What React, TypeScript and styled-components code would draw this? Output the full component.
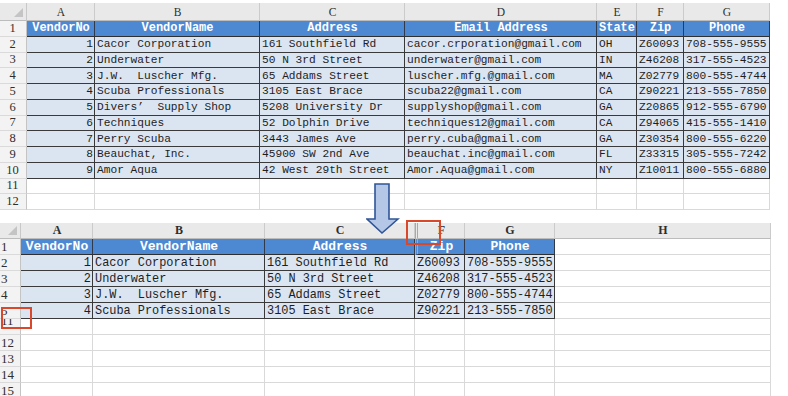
import React from "react";
import styled, { createGlobalStyle, css } from "styled-components";

const GlobalStyle = createGlobalStyle`
  html, body {
    margin: 0;
    padding: 0;
    background: #ffffff;
  }
  * {
    box-sizing: border-box;
  }
`;

type Kind = "corner" | "col" | "rownum" | "head" | "data" | "empty";

const MONO = `"Liberation Mono", "DejaVu Sans Mono", monospace`;
const SERIF = `"Liberation Serif", "DejaVu Serif", serif`;

const Page = styled.div`
  position: relative;
  width: 788px;
  height: 396px;
  overflow: hidden;
  padding-top: 3px;
  display: flex;
  flex-direction: column;
  gap: 13px;
`;

const Sheet = styled.div<{ $cols: number[]; $rows: string; $big?: boolean }>`
  display: grid;
  grid-template-columns: ${({ $cols }) => $cols.map((c) => `${c}px`).join(" ")};
  grid-template-rows: ${({ $rows }) => $rows};
  font-family: ${MONO};
  font-size: ${({ $big }) => ($big ? "11.9px" : "11.2px")};
  color: #1e1e1e;
  flex-shrink: 0;
`;

const Cell = styled.div<{ $kind: Kind; $align?: string; $big?: boolean; $clip?: boolean; $hidden?: boolean }>`
  position: relative;
  display: flex;
  align-items: center;
  justify-content: ${({ $align }) => $align || "flex-start"};
  white-space: pre;
  overflow: hidden;
  padding: 0 1px 0 2px;
  border-right: 1px solid #d6d6d6;
  border-bottom: 1px solid #d6d6d6;

  ${({ $kind, $big }) =>
    $kind === "corner" &&
    css`
      background: #e9e9e9;
      border-right-color: #c8c8c8;
      border-bottom-color: #bcbcbc;
      &::after {
        content: "";
        position: absolute;
        right: 3px;
        bottom: 3px;
        width: 0;
        height: 0;
        border-left: 9px solid transparent;
        border-bottom: 9px solid #c4c4c4;
        display: ${$big ? "block" : "block"};
      }
    `}

  ${({ $kind, $big }) =>
    $kind === "col" &&
    css`
      background: #e9e9e9;
      border-right-color: #cbcbcb;
      border-bottom-color: #bcbcbc;
      justify-content: center;
      font-family: ${SERIF};
      font-size: ${$big ? "12px" : "11.5px"};
      font-weight: ${$big ? 700 : 400};
      color: #2e2e2e;
    `}

  ${({ $kind, $big }) =>
    $kind === "rownum" &&
    css`
      background: #f3f3f3;
      border-right-color: #c4c4c4;
      border-bottom-color: #dadada;
      font-family: ${SERIF};
      font-size: ${$big ? "13px" : "12.5px"};
      color: #2e2e2e;
      justify-content: ${$big ? "flex-start" : "center"};
      padding-left: ${$big ? "1px" : "0"};
    `}

  ${({ $kind, $big }) =>
    $kind === "head" &&
    css`
      background: #4d88d3;
      color: #ffffff;
      font-weight: 700;
      font-size: ${$big ? "13px" : "12px"};
      justify-content: center;
      border-right-color: #2f3b4c;
      border-bottom-color: #2f2f2f;
    `}

  ${({ $kind }) =>
    $kind === "data" &&
    css`
      background: #dbe5f1;
      border-right-color: #383838;
      border-bottom-color: #3a3a3a;
    `}

  ${({ $kind }) =>
    $kind === "empty" &&
    css`
      background: #ffffff;
      border-right-color: #d9d9d9;
      border-bottom-color: #d9d9d9;
    `}

  ${({ $hidden }) =>
    $hidden &&
    css`
      border-left: 3px double #a8a8a8;
    `}

  ${({ $clip }) =>
    $clip &&
    css`
      align-items: flex-start;
      line-height: 1;
      & > span {
        margin-top: -5px;
      }
    `}
`;

const Marker = styled.div<{ $x: number; $y: number; $w: number; $h: number }>`
  position: absolute;
  left: ${({ $x }) => $x}px;
  top: ${({ $y }) => $y}px;
  width: ${({ $w }) => $w}px;
  height: ${({ $h }) => $h}px;
  border: 2px solid #d9482b;
  pointer-events: none;
`;

const ArrowWrap = styled.svg`
  position: absolute;
  left: 366px;
  top: 182px;
`;

const topCols = [27, 68, 165, 145, 192, 40, 47, 86];
const topLetters = ["A", "B", "C", "D", "E", "F", "G"];
const topHead = ["VendorNo", "VendorName", "Address", "Email Address", "State", "Zip", "Phone"];

const vendors: (string | number)[][] = [
  [1, "Cacor Corporation", "161 Southfield Rd", "cacor.crporation@gmail.com", "OH", "Z60093", "708-555-9555"],
  [2, "Underwater", "50 N 3rd Street", "underwater@gmail.com", "IN", "Z46208", "317-555-4523"],
  [3, "J.W.  Luscher Mfg.", "65 Addams Street", "luscher.mfg.@gmail.com", "MA", "Z02779", "800-555-4744"],
  [4, "Scuba Professionals", "3105 East Brace", "scuba22@gmail.com", "CA", "Z90221", "213-555-7850"],
  [5, "Divers’  Supply Shop", "5208 University Dr", "supplyshop@gmail.com", "GA", "Z20865", "912-555-6790"],
  [6, "Techniques", "52 Dolphin Drive", "techniques12@gmail.com", "CA", "Z94065", "415-555-1410"],
  [7, "Perry Scuba", "3443 James Ave", "perry.cuba@gmail.com", "GA", "Z30354", "800-555-6220"],
  [8, "Beauchat, Inc.", "45900 SW 2nd Ave", "beauchat.inc@gmail.com", "FL", "Z33315", "305-555-7242"],
  [9, "Amor Aqua", "42 West 29th Street", "Amor.Aqua@gmail.com", "NY", "Z10011", "800-555-6880"],
];

const botCols = [21, 72, 172, 150, 50, 90, 216];
const botLetters = ["A", "B", "C", "F", "G", "H"];
const botHead = ["VendorNo", "VendorName", "Address", "Zip", "Phone"];
const botRowLabels = ["2", "3", "4", "5"];
const botEmptyLabels = ["11", "12", "13", "14", "15"];

function TopSheet() {
  return (
    <Sheet $cols={topCols} $rows={`18px repeat(12, 15.75px)`}>
      <Cell $kind="corner" />
      {topLetters.map((l) => (
        <Cell key={l} $kind="col">
          {l}
        </Cell>
      ))}

      <Cell $kind="rownum">1</Cell>
      {topHead.map((h) => (
        <Cell key={h} $kind="head">
          {h}
        </Cell>
      ))}

      {vendors.map((row, i) => (
        <React.Fragment key={i}>
          <Cell $kind="rownum">{i + 2}</Cell>
          {row.map((v, j) => (
            <Cell key={j} $kind="data" $align={j === 0 ? "flex-end" : undefined}>
              {v}
            </Cell>
          ))}
        </React.Fragment>
      ))}

      {[11, 12].map((n) => (
        <React.Fragment key={n}>
          <Cell $kind="rownum">{n}</Cell>
          {topLetters.map((l) => (
            <Cell key={l} $kind="empty" />
          ))}
        </React.Fragment>
      ))}
    </Sheet>
  );
}

function BottomSheet() {
  const picked = vendors.slice(0, 4).map((r) => [r[0], r[1], r[2], r[5], r[6]]);
  return (
    <Sheet $cols={botCols} $rows={`16px repeat(10, 16px)`} $big>
      <Cell $kind="corner" $big />
      {botLetters.map((l) => (
        <Cell key={l} $kind="col" $big $hidden={l === "F"}>
          {l}
        </Cell>
      ))}

      <Cell $kind="rownum" $big>
        1
      </Cell>
      {botHead.map((h) => (
        <Cell key={h} $kind="head" $big $hidden={h === "Zip"}>
          {h}
        </Cell>
      ))}
      <Cell $kind="empty" />

      {picked.map((row, i) => (
        <React.Fragment key={i}>
          <Cell $kind="rownum" $big>
            {botRowLabels[i]}
          </Cell>
          {row.map((v, j) => (
            <Cell key={j} $kind="data" $big $align={j === 0 ? "flex-end" : undefined}>
              {v}
            </Cell>
          ))}
          <Cell $kind="empty" />
        </React.Fragment>
      ))}

      {botEmptyLabels.map((n) => (
        <React.Fragment key={n}>
          <Cell $kind="rownum" $big $clip={n === "11"}>
            <span>{n}</span>
          </Cell>
          {botLetters.map((l) => (
            <Cell key={l} $kind="empty" />
          ))}
        </React.Fragment>
      ))}
    </Sheet>
  );
}

function DownArrow() {
  return (
    <ArrowWrap width="34" height="54" viewBox="0 0 34 54">
      <path
        d="M9 2 H23 V37 H32 L16 51 L1 37 H9 Z"
        fill="#b4c7e7"
        stroke="#2f5597"
        strokeWidth="1.6"
        strokeLinejoin="miter"
      />
    </ArrowWrap>
  );
}

export default function App() {
  return (
    <>
      <GlobalStyle />
      <Page>
        <TopSheet />
        <BottomSheet />
        <DownArrow />
        <Marker $x={406} $y={220} $w={35} $h={25} />
        <Marker $x={1} $y={307} $w={31} $h={22} />
      </Page>
    </>
  );
}
